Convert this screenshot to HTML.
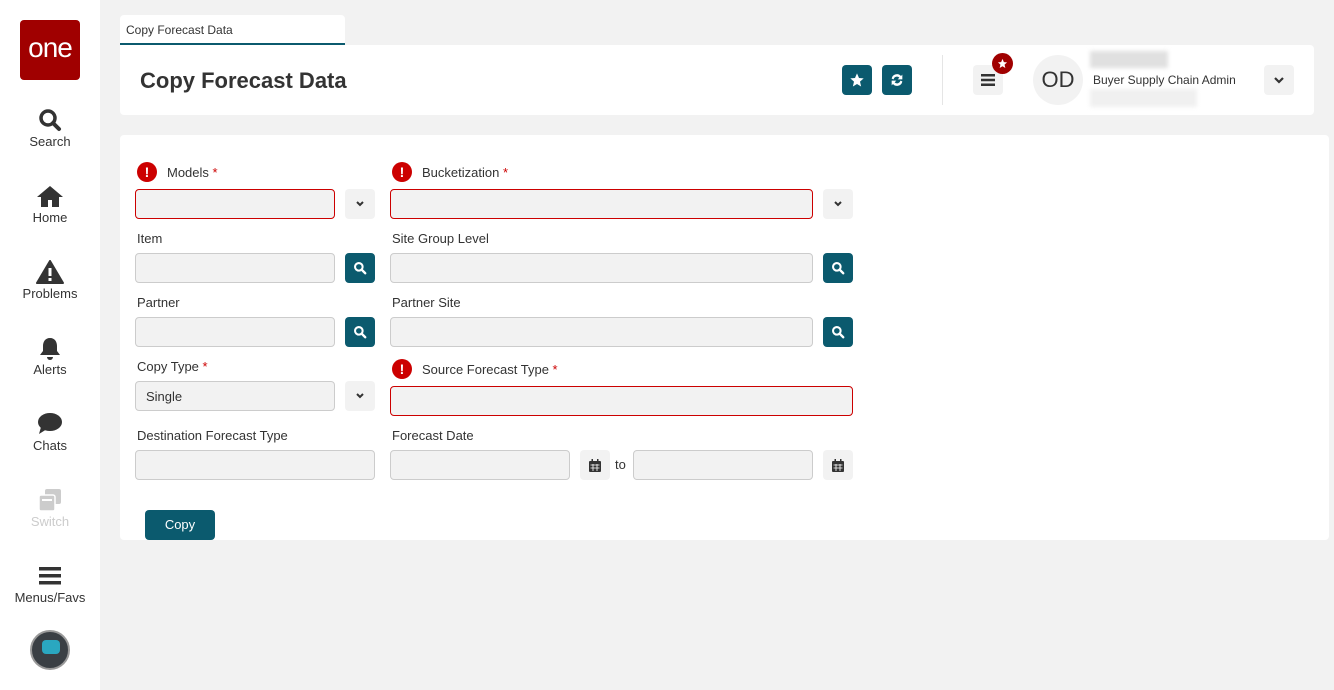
<!DOCTYPE html><html><head><style>
*{box-sizing:border-box;margin:0;padding:0}
body{width:1334px;height:690px;background:#f2f2f2;font-family:"Liberation Sans",sans-serif;color:#333;position:relative;overflow:hidden}
.a{position:absolute}
.side{left:0;top:0;width:100px;height:690px;background:#fff}
.nav{width:100px;text-align:center;font-size:13px;color:#333}
.nav svg{display:block;margin:0 auto 2px}
.lbl{font-size:13px;color:#333}
.inp{background:#f2f2f2;border:1px solid #ccc;border-radius:4px;height:30px}
.err{border-color:#c00}
.btn{width:30px;height:30px;border-radius:4px;background:#f2f2f2;display:flex;align-items:center;justify-content:center}
.tb{background:#0b5a6e}
.ex{width:20px;height:20px;border-radius:50%;background:#c00;color:#fff;font-weight:bold;font-size:14px;text-align:center;line-height:20px}
.st{color:#c00}
</style></head><body>
<div class="a side">
 <div class="a" style="left:20px;top:20px;width:60px;height:60px;background:#a00000;border-radius:4px;color:#fff;font-size:28px;text-align:center;line-height:56px;letter-spacing:-1px">one</div>
 <div class="a nav" style="top:108px"><svg width="24" height="24" viewBox="0 0 24 24"><circle cx="10" cy="10" r="7" fill="none" stroke="#333" stroke-width="3.5"/><path d="M15 15l6 6" stroke="#333" stroke-width="4" stroke-linecap="round"/></svg>Search</div>
 <div class="a nav" style="top:184px"><svg width="28" height="24" viewBox="0 0 28 24"><path d="M14 2L1 13h4v10h7v-7h4v7h7V13h4z" fill="#333"/></svg>Home</div>
 <div class="a nav" style="top:260px"><svg width="28" height="24" viewBox="0 0 28 24"><path d="M14 1L1 23h26z" fill="#333" stroke="#333" stroke-linejoin="round" stroke-width="2"/><rect x="12.5" y="8" width="3" height="8" fill="#fff"/><rect x="12.5" y="18" width="3" height="3" fill="#fff"/></svg>Problems</div>
 <div class="a nav" style="top:336px"><svg width="24" height="24" viewBox="0 0 24 24"><path d="M12 2c-5 0-7 4-7 8v5l-3 4h20l-3-4v-5c0-4-2-8-7-8z" fill="#333"/><path d="M9 21a3 3 0 006 0z" fill="#333"/></svg>Alerts</div>
 <div class="a nav" style="top:412px"><svg width="26" height="24" viewBox="0 0 26 24"><ellipse cx="13" cy="10" rx="12" ry="9" fill="#333"/><path d="M4 15L2 22l8-5z" fill="#333"/></svg>Chats</div>
 <div class="a nav" style="top:488px;color:#ccc"><svg width="26" height="24" viewBox="0 0 26 24"><rect x="8" y="1" width="16" height="15" rx="2" fill="#ccc"/><rect x="2" y="7" width="16" height="16" rx="2" fill="#ccc" stroke="#fff" stroke-width="1.5"/><rect x="5" y="11" width="10" height="2" fill="#fff"/></svg>Switch</div>
 <div class="a nav" style="top:564px"><svg width="24" height="24" viewBox="0 0 24 24"><rect x="1" y="3" width="22" height="3.5" fill="#333"/><rect x="1" y="10" width="22" height="3.5" fill="#333"/><rect x="1" y="17" width="22" height="3.5" fill="#333"/></svg>Menus/Favs</div>
 <div class="a" style="left:30px;top:630px;width:40px;height:40px;border-radius:50%;background:#3a3f44;border:2px solid #999"><div class="a" style="left:10px;top:8px;width:18px;height:14px;background:#2aa7c0;border-radius:4px"></div></div>
</div>
<div class="a" style="left:120px;top:15px;width:225px;height:30px;background:#fff;border-bottom:2px solid #0b5a6e;border-radius:4px 4px 0 0;font-size:12px;padding:8px 6px">Copy Forecast Data</div>
<div class="a" style="left:120px;top:45px;width:1194px;height:70px;background:#fff;border-radius:0 4px 4px 4px">
 <div class="a" style="left:20px;top:23px;font-size:22px;font-weight:bold;color:#333">Copy Forecast Data</div>
 <div class="a btn tb" style="left:722px;top:20px"><svg width="16" height="16" viewBox="0 0 24 24"><path d="M12 2l3 7 7 .6-5.5 4.8 1.7 7.4L12 18l-6.2 3.8 1.7-7.4L2 9.6 9 9z" fill="#fff"/></svg></div>
 <div class="a btn tb" style="left:762px;top:20px"><svg width="16" height="16" viewBox="0 0 24 24"><path d="M4 10a8 8 0 0114-4l2-2v7h-7l2.5-2.5A5 5 0 007 11z M20 14a8 8 0 01-14 4l-2 2v-7h7l-2.5 2.5A5 5 0 0017 13z" fill="#fff"/></svg></div>
 <div class="a" style="left:822px;top:10px;width:1px;height:50px;background:#e5e5e5"></div>
 <div class="a btn" style="left:853px;top:20px"><svg width="14" height="12" viewBox="0 0 14 12"><rect y="0" width="14" height="2.5" fill="#333"/><rect y="4.75" width="14" height="2.5" fill="#333"/><rect y="9.5" width="14" height="2.5" fill="#333"/></svg></div>
 <div class="a" style="left:872px;top:8px;width:21px;height:21px;border-radius:50%;background:#a00000;display:flex;align-items:center;justify-content:center"><svg width="11" height="11" viewBox="0 0 24 24"><path d="M12 2l3 7 7 .6-5.5 4.8 1.7 7.4L12 18l-6.2 3.8 1.7-7.4L2 9.6 9 9z" fill="#fff"/></svg></div>
 <div class="a" style="left:913px;top:10px;width:50px;height:50px;border-radius:50%;background:#f2f2f2;font-size:22px;text-align:center;line-height:50px">OD</div>
 <div class="a" style="left:970px;top:6px;width:78px;height:17px;background:#e0e0e0;filter:blur(2px)"></div>
 <div class="a" style="left:973px;top:28px;font-size:12px;color:#333">Buyer Supply Chain Admin</div>
 <div class="a" style="left:970px;top:44px;width:107px;height:18px;background:#f0f0f0;filter:blur(2px)"></div>
 <div class="a btn" style="left:1144px;top:20px"><svg width="10" height="8" viewBox="0 0 10 8"><path d="M1 2l4 4 4-4" stroke="#333" stroke-width="2.2" fill="none"/></svg></div>
</div>
<div class="a" style="left:120px;top:135px;width:1209px;height:405px;background:#fff;border-radius:4px"></div>

<div class="a ex" style="left:137px;top:162px">!</div><div class="a lbl" style="left:167px;top:165px">Models <span class="st">*</span></div>
<div class="a inp err" style="left:135px;top:189px;width:200px"></div>
<div class="a btn" style="left:345px;top:189px"><svg width="10" height="8" viewBox="0 0 10 8"><path d="M2 2l3 3 3-3" stroke="#333" stroke-width="2" fill="none"/></svg></div>
<div class="a ex" style="left:392px;top:162px">!</div><div class="a lbl" style="left:422px;top:165px">Bucketization <span class="st">*</span></div>
<div class="a inp err" style="left:390px;top:189px;width:423px"></div>
<div class="a btn" style="left:823px;top:189px"><svg width="10" height="8" viewBox="0 0 10 8"><path d="M2 2l3 3 3-3" stroke="#333" stroke-width="2" fill="none"/></svg></div>

<div class="a lbl" style="left:137px;top:231px">Item</div>
<div class="a inp" style="left:135px;top:253px;width:200px"></div>
<div class="a btn tb" style="left:345px;top:253px"><svg width="14" height="14" viewBox="0 0 24 24"><circle cx="10" cy="10" r="6.5" fill="none" stroke="#fff" stroke-width="3.5"/><path d="M15 15l6 6" stroke="#fff" stroke-width="4" stroke-linecap="round"/></svg></div>
<div class="a lbl" style="left:392px;top:231px">Site Group Level</div>
<div class="a inp" style="left:390px;top:253px;width:423px"></div>
<div class="a btn tb" style="left:823px;top:253px"><svg width="14" height="14" viewBox="0 0 24 24"><circle cx="10" cy="10" r="6.5" fill="none" stroke="#fff" stroke-width="3.5"/><path d="M15 15l6 6" stroke="#fff" stroke-width="4" stroke-linecap="round"/></svg></div>

<div class="a lbl" style="left:137px;top:295px">Partner</div>
<div class="a inp" style="left:135px;top:317px;width:200px"></div>
<div class="a btn tb" style="left:345px;top:317px"><svg width="14" height="14" viewBox="0 0 24 24"><circle cx="10" cy="10" r="6.5" fill="none" stroke="#fff" stroke-width="3.5"/><path d="M15 15l6 6" stroke="#fff" stroke-width="4" stroke-linecap="round"/></svg></div>
<div class="a lbl" style="left:392px;top:295px">Partner Site</div>
<div class="a inp" style="left:390px;top:317px;width:423px"></div>
<div class="a btn tb" style="left:823px;top:317px"><svg width="14" height="14" viewBox="0 0 24 24"><circle cx="10" cy="10" r="6.5" fill="none" stroke="#fff" stroke-width="3.5"/><path d="M15 15l6 6" stroke="#fff" stroke-width="4" stroke-linecap="round"/></svg></div>

<div class="a lbl" style="left:137px;top:359px">Copy Type <span class="st">*</span></div>
<div class="a inp" style="left:135px;top:381px;width:200px;font-size:13px;padding:7px 10px">Single</div>
<div class="a btn" style="left:345px;top:381px"><svg width="10" height="8" viewBox="0 0 10 8"><path d="M2 2l3 3 3-3" stroke="#333" stroke-width="2" fill="none"/></svg></div>
<div class="a ex" style="left:392px;top:359px">!</div><div class="a lbl" style="left:422px;top:362px">Source Forecast Type <span class="st">*</span></div>
<div class="a inp err" style="left:390px;top:386px;width:463px"></div>

<div class="a lbl" style="left:137px;top:428px">Destination Forecast Type</div>
<div class="a inp" style="left:135px;top:450px;width:240px"></div>
<div class="a lbl" style="left:392px;top:428px">Forecast Date</div>
<div class="a inp" style="left:390px;top:450px;width:180px"></div>
<div class="a btn" style="left:580px;top:450px"><svg width="12" height="13" viewBox="0 0 12 13"><rect x="0" y="2" width="12" height="11" rx="1" fill="#333"/><rect x="2.5" y="0" width="1.5" height="3" fill="#333"/><rect x="8" y="0" width="1.5" height="3" fill="#333"/><path d="M1.5 6h9M1.5 9h9M4 5v7M8 5v7" stroke="#fff" stroke-width=".8"/></svg></div>
<div class="a lbl" style="left:615px;top:457px">to</div>
<div class="a inp" style="left:633px;top:450px;width:180px"></div>
<div class="a btn" style="left:823px;top:450px"><svg width="12" height="13" viewBox="0 0 12 13"><rect x="0" y="2" width="12" height="11" rx="1" fill="#333"/><rect x="2.5" y="0" width="1.5" height="3" fill="#333"/><rect x="8" y="0" width="1.5" height="3" fill="#333"/><path d="M1.5 6h9M1.5 9h9M4 5v7M8 5v7" stroke="#fff" stroke-width=".8"/></svg></div>

<div class="a" style="left:145px;top:510px;width:70px;height:30px;background:#0b5a6e;border-radius:4px;color:#fff;font-size:13px;text-align:center;line-height:30px">Copy</div>
</body></html>
